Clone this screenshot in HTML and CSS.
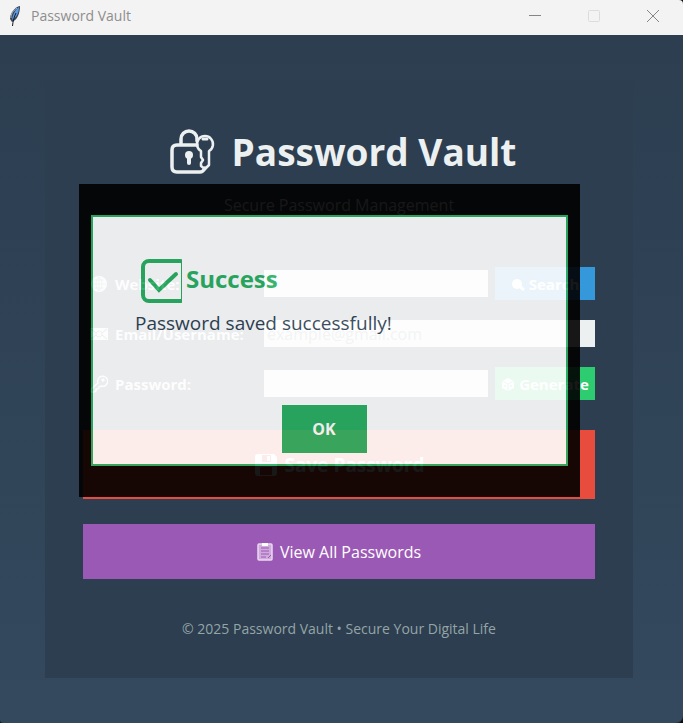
FILE: index.html
```html
<!DOCTYPE html>
<html lang="en">
<head>
<meta charset="utf-8">
<meta name="viewport" content="width=device-width, initial-scale=1">
<title>Password Vault</title>
<link rel="stylesheet" href="styles.css">
</head>
<body>
<div class="window">
  <header class="titlebar">
    <svg class="feather" viewBox="0 0 14 22" aria-hidden="true">
      <path d="M12 1C7 2 2 8 2 14l2 3c5-2 8-8 8-16z" fill="#3a4654"/>
      <path d="M11 2C7 5 5 9 4 15c5-3 7-8 7-13z" fill="#5b9bea"/>
      <path d="M8 8C6 12 5 16 4.500 21" fill="none" stroke="#15191e"/>
      <path d="M9 3C5 6 3 9 3 13" fill="none" stroke="#a9b4c0"/>
    </svg>
    <span class="titlebar-text">Password Vault</span>
    <div class="controls">
      <button type="button" aria-label="Minimize"><svg viewBox="0 0 12 12"><path d="M0 5.500h12"/></svg></button>
      <button type="button" aria-label="Maximize" disabled><svg viewBox="0 0 12 12"><rect x=".5" y=".5" width="11" height="11" rx="1"/></svg></button>
      <button type="button" aria-label="Close"><svg viewBox="0 0 12 12"><path d="M0 0l12 12M12 0L0 12"/></svg></button>
    </div>
  </header>

  <main class="desktop">
    <section class="card">
      <h1 class="title">
        <svg class="title-icon" viewBox="0 0 46 46" aria-hidden="true" fill="none" stroke="currentColor" stroke-width="3.500" stroke-linejoin="round" stroke-linecap="round">
          <path d="M28 16H8q-5 0-5 5v17q0 5 5 5h23q3 0 5-4"/>
          <path d="M12 15V10a8 8 0 0 1 16 0v2"/>
          <path d="M32 22a8 8 0 1 1 8 0v14l-4 4-4-3v-3l2-3-2-3z" stroke-width="2.500"/>
          <path d="M34 10h4" stroke-width="3"/>
          <circle cx="20" cy="26" r="4" fill="currentColor" stroke="none"/>
          <path d="M20 28v6" stroke-width="4"/>
        </svg>
        <span>Password Vault</span>
      </h1>
      <p class="subtitle">Secure Password Management</p>

      <form class="form">
        <div class="fields">
          <label for="site">
            <svg viewBox="0 0 18 18" aria-hidden="true"><circle cx="9" cy="9" r="8" fill="currentColor"/><path d="M2 9h14M9 2v14M4 5h10M4 13h10M9 2C5 5 5 13 9 16M9 2c4 3 4 11 0 14" fill="none" stroke="#2c3e50" stroke-width=".5"/></svg>
            Website:
          </label>
          <input id="site" type="text">
          <button type="button" class="side search">
            <svg viewBox="0 0 14 14" aria-hidden="true"><circle cx="6" cy="7" r="5" fill="currentColor"/><path d="M8 9l5 4" stroke="currentColor" stroke-width="3"/></svg>
            Search
          </button>

          <label for="email">
            <svg viewBox="0 0 18 18" aria-hidden="true"><path d="M0 3h18v12H0z" fill="currentColor"/><path d="M1 4l5 4M17 4l-5 4M1 14l5-4M17 14l-5-4" stroke="#2c3e50"/><circle cx="9" cy="9" r="3" fill="none" stroke="#2c3e50" stroke-width=".7"/></svg>
            Email/Username:
          </label>
          <input id="email" class="wide" type="text" value="example@gmail.com">

          <label for="password">
            <svg viewBox="0 0 18 18" aria-hidden="true" fill="none" stroke="currentColor" stroke-width="1.500" stroke-linejoin="round"><path d="M8 8a5 5 0 1 1 3 3l-2 1-1 2H6v2l-2 1H1v-3z"/><circle cx="13" cy="5" r="1" fill="currentColor"/></svg>
            Password:
          </label>
          <input id="password" type="text">
          <button type="button" class="side generate">
            <svg viewBox="0 0 14 14" aria-hidden="true"><path d="M7 1l6 3v7l-6 3-6-3V4z" fill="currentColor"/><path d="M1 4l6 3 6-3M7 7v7" fill="none" stroke="#2ecc71"/><circle cx="4" cy="9" r="1" fill="#2ecc71"/><circle cx="10" cy="9" r="1" fill="#2ecc71"/></svg>
            Generate
          </button>
        </div>

        <button type="submit" class="save">
          <svg viewBox="0 0 24 24" aria-hidden="true"><path d="M4 1h16l3 3v16q0 3-3 3H4q-3 0-3-3V4q0-3 3-3z" fill="currentColor"/><path d="M8 2h9v7H8zM6 14h12v8H6z" fill="#e74c3c"/><path d="M13 3h3v5h-3z" fill="currentColor"/></svg>
          Save Password
        </button>
        <button type="button" class="view">
          <svg viewBox="0 0 16 18" aria-hidden="true"><rect x="1" y="1" width="14" height="16" rx="1" fill="#d0a9dd" stroke="#ead8f0" stroke-width="1.500"/><path d="M4 5h8M4 8h8M4 11h8M4 14h5" stroke="#9b59b6"/><path d="M5 0h6v3H5z" fill="#fff"/><path d="M11 15l3-3" stroke="#9b59b6"/></svg>
          View All Passwords
        </button>
      </form>

      <footer class="footer">© 2025 Password Vault • Secure Your Digital Life</footer>
    </section>
  </main>

  <div class="dialog" role="dialog" aria-labelledby="dialog-title">
    <div class="dialog-box">
      <h2 class="dialog-title" id="dialog-title">
        <svg viewBox="0 0 41 44" aria-hidden="true" fill="none" stroke="currentColor" stroke-width="4"><rect x="2" y="2" width="43" height="40" rx="6"/><path d="M40.500 3v38" stroke-width="1"/><path d="M9 21l9 10 17-16" stroke-linecap="round"/></svg>
        <span>Success</span>
      </h2>
      <p class="dialog-text">Password saved successfully!</p>
      <button type="button" class="ok">OK</button>
    </div>
  </div>
</div>
</body>
</html>
```
FILE: styles.css
```css
* {
  box-sizing: border-box;
}

body {
  margin: 0;
  background: #0b0f13;
  font-family: "Open Sans", "Noto Sans", sans-serif;
  font-size: 15px;
  color: #ecf0f1;
}

h1, h2, p {
  margin: 0;
}

button, input {
  font: inherit;
  color: inherit;
  border: 0;
  padding: 0;
}

svg {
  flex: none;
}

.window {
  position: relative;
  display: flex;
  flex-direction: column;
  min-height: 100vh;
  border-radius: 0 4px 8px 4px;
  overflow: hidden;
  border-bottom: 1px solid #2b3136;
}

.titlebar {
  display: flex;
  align-items: center;
  height: 35px;
  padding: 0 24px 4px 8px;
  background: #f3f3f3;
  color: #8e8e8e;
}

.feather {
  width: 14px;
  height: 22px;
}

.titlebar-text {
  margin-left: 9px;
  font-size: 14px;
}

.controls {
  display: flex;
  gap: 47px;
  margin-left: auto;
}

.controls button {
  display: flex;
  background: none;
}

.controls svg {
  width: 12px;
  height: 12px;
  fill: none;
  stroke: #858585;
}

.controls button:disabled svg {
  stroke: #dcdcdc;
}

.desktop {
  flex: 1;
  padding: 45px 50px 45px 45px;
  background: linear-gradient(#2c3e50, #34495e);
}

.card {
  padding: 42px 38px 39px;
  background: #2c3e50;
}

.title {
  display: flex;
  justify-content: center;
  align-items: center;
  gap: 17px;
  height: 60px;
  padding-left: 7px;
  font-size: 37px;
  line-height: 60px;
}

.title-icon {
  width: 46px;
  height: 46px;
}

.subtitle {
  margin: 11px 0 50px;
  text-align: center;
  font-size: 16px;
  line-height: 24px;
}

.fields {
  display: grid;
  grid-template-columns: 174px 1fr 100px;
  column-gap: 7px;
  row-gap: 17px;
  align-items: center;
}

.fields label {
  display: flex;
  align-items: center;
  gap: 7px;
  height: 33px;
  padding-left: 7px;
  font-weight: 700;
  white-space: nowrap;
}

.fields label svg {
  width: 18px;
  height: 18px;
}

.fields input {
  min-width: 0;
  width: 100%;
  height: 27px;
  padding: 0 3px;
  background: #ecf0f1;
  color: #7f8c8d;
  font-size: 16px;
}

.fields .wide {
  grid-column: 2 / 4;
}

.side {
  display: flex;
  align-items: center;
  justify-content: center;
  gap: 4px;
  height: 33px;
  font-weight: 700;
  color: #fff;
}

.side svg {
  width: 14px;
  height: 14px;
}

.search {
  background: #3498db;
}

.generate {
  background: #2ecc71;
}

.save, .view {
  display: flex;
  align-items: center;
  justify-content: center;
  width: 100%;
  gap: 7px;
  color: #fff;
}

.save {
  height: 69px;
  margin-top: 30px;
  background: #e74c3c;
  font-size: 19px;
  font-weight: 700;
}

.save svg {
  width: 24px;
  height: 24px;
}

.view {
  height: 55px;
  margin-top: 25px;
  background: #9b59b6;
  font-size: 16px;
}

.view svg {
  width: 16px;
  height: 18px;
}

.footer {
  margin-top: 40px;
  text-align: center;
  font-size: 14px;
  line-height: 20px;
  color: #95a5a6;
}

.dialog {
  position: absolute;
  top: 184px;
  left: 79px;
  right: 103px;
  padding: 31px 12px;
  background: #000;
  opacity: .9;
}

.dialog-box {
  display: flex;
  flex-direction: column;
  padding: 42px 42px 11px;
  background: #fff;
  border: 2px solid #27ae60;
}

.dialog-title {
  display: flex;
  align-items: center;
  gap: 4px;
  height: 44px;
  padding-left: 6px;
  font-size: 24px;
  line-height: 32px;
  color: #27ae60;
}

.dialog-title svg {
  width: 41px;
  height: 44px;
}

.dialog-title span {
  padding-bottom: 4px;
}

.dialog-text {
  margin: 6px 0 68px;
  font-size: 19px;
  line-height: 28px;
  color: #2c3e50;
}

.ok {
  align-self: center;
  width: 85px;
  height: 48px;
  margin-right: 11px;
  background: #27ae60;
  color: #fff;
  font-size: 16px;
  font-weight: 700;
}
```
